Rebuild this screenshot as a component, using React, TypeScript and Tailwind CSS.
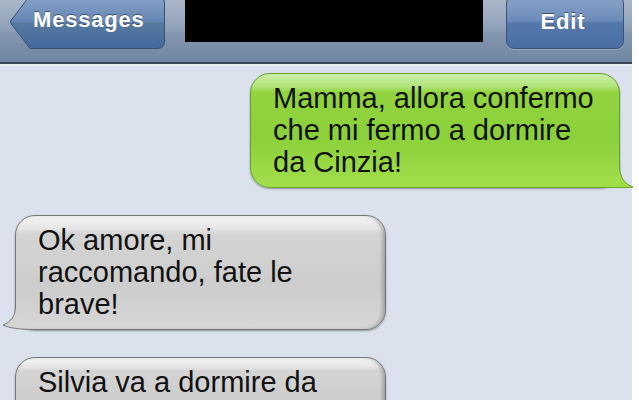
import React from "react";

const font = "font-['Liberation_Sans',Arial,Helvetica,sans-serif]";

function BackButton() {
  return (
    <div className="relative -mt-[5px] h-[54px] w-[156px] shrink-0">
      <svg className="absolute inset-0" width="156" height="54" viewBox="0 0 156 54">
        <defs>
          <linearGradient id="backGrad" x1="0" y1="0" x2="0" y2="1">
            <stop offset="0" stopColor="#8aa4c8" />
            <stop offset="0.5" stopColor="#6384b3" />
            <stop offset="0.52" stopColor="#56799f" />
            <stop offset="1" stopColor="#44699d" />
          </linearGradient>
        </defs>
        <path
          d="M21 0.5 L2 25.5 Q1 27 2 28.5 L21 53.5 L148 53.5 Q155.5 53.5 155.5 46 L155.5 8 Q155.5 0.5 148 0.5 Z"
          fill="url(#backGrad)"
          stroke="#3b5070"
          strokeWidth="1"
        />
      </svg>
      <span className="relative block pl-[24px] pt-[14px] text-[22px] leading-[22px] font-bold tracking-[0.8px] text-white [text-shadow:0_-1px_0_rgba(0,0,0,0.45)]">
        Messages
      </span>
    </div>
  );
}

function Bubble({ side, lines }: { side: "me" | "them"; lines: string[] }) {
  const me = side === "me";
  return (
    <div
      className={
        me
          ? "relative mr-[12px] w-[370px] self-end rounded-[20px] border border-[#64a22a] bg-[linear-gradient(180deg,#cdeeaa_0%,#b2e47a_11%,#92d43f_16%,#8bd03a_55%,#a2df4c_100%)] pb-[9px] pl-[22px] pr-[14px] pt-[8px] shadow-[0_1px_2px_rgba(0,0,0,0.35)]"
          : "relative ml-[15px] w-[371px] self-start rounded-[20px] border border-[#777777] bg-[linear-gradient(180deg,#f3f3f3_0%,#e6e6e6_11%,#d4d4d4_16%,#cdcdcd_60%,#d6d6d6_100%)] pb-[9px] pl-[22px] pr-[14px] pt-[8px] shadow-[0_1px_2px_rgba(0,0,0,0.35),inset_-4px_0_4px_-2px_rgba(0,0,0,0.28)]"
      }
    >
      <p className="text-[29px] leading-[32px] text-[#111111]">
        {lines.map((l, i) => (
          <React.Fragment key={i}>
            {l}
            {i < lines.length - 1 && <br />}
          </React.Fragment>
        ))}
      </p>
      {me ? (
        <svg className="absolute bottom-[-2px] right-[-15px]" width="34" height="27" viewBox="0 0 34 27">
          <path
            d="M18.5 4 L19.5 4 C19.5 16 25 22 33 25 C26 26 14 25.5 0 25.5 L0 24.5 A18.5 18.5 0 0 0 18.5 6 Z"
            fill="#a0de4a"
          />
          <path d="M19.5 4 C19.5 16 25 22 33 25 C26 26 14 25.5 0 25.5" fill="none" stroke="#64a22a" strokeWidth="1" />
        </svg>
      ) : (
        <svg className="absolute bottom-[-2px] left-[-15px] -scale-x-100" width="34" height="27" viewBox="0 0 34 27">
          <path
            d="M18.5 2 L19.5 2 C19.5 12 24 18 32 21 C26 24 16 25.5 0 25.5 L0 24.5 A18.5 18.5 0 0 0 18.5 6 Z"
            fill="#d5d5d5"
          />
          <path d="M19.5 2 C19.5 12 24 18 32 21 C26 24 16 25.5 0 25.5" fill="none" stroke="#777777" strokeWidth="1" />
        </svg>
      )}
    </div>
  );
}

export default function App() {
  return (
    <div className={`h-[400px] w-[639px] overflow-hidden bg-white ${font}`}>
      <div className="flex h-full w-[632px] flex-col bg-[#dbe2ed]">
        <header className="flex h-[64px] shrink-0 items-start gap-[20px] border-b-2 border-[#3d4656] bg-[linear-gradient(180deg,#aab7c9_0%,#8d9fb7_50%,#8597b0_52%,#6f86a4_100%)] pl-[9px]">
          <BackButton />
          <div className="h-[42px] w-[298px] shrink-0 bg-black" />
          <div className="-mt-[5px] ml-[3px] flex h-[54px] w-[118px] shrink-0 justify-center rounded-[8px] border border-[#3d5272] bg-[linear-gradient(180deg,#8aa4c8_0%,#6a8bb9_48%,#5478aa_52%,#4a6fa4_100%)] pt-[15px] shadow-[0_1px_0_rgba(255,255,255,0.25)]">
            <span className="pr-[4px] text-[22px] leading-[22px] font-bold tracking-[0.8px] text-white [text-shadow:0_-1px_0_rgba(0,0,0,0.45)]">
              Edit
            </span>
          </div>
        </header>
        <div className="h-[2px] shrink-0 bg-[#e9edf3]" />
        <div className="flex flex-col pt-[7px]">
          <Bubble side="me" lines={["Mamma, allora confermo", "che mi fermo a dormire", "da Cinzia!"]} />
          <div className="mt-[27px] flex flex-col">
            <Bubble side="them" lines={["Ok amore, mi", "raccomando, fate le", "brave!"]} />
          </div>
          <div className="mt-[27px] flex flex-col">
            <Bubble side="them" lines={["Silvia va a dormire da", "\u00a0"]} />
          </div>
        </div>
      </div>
    </div>
  );
}
